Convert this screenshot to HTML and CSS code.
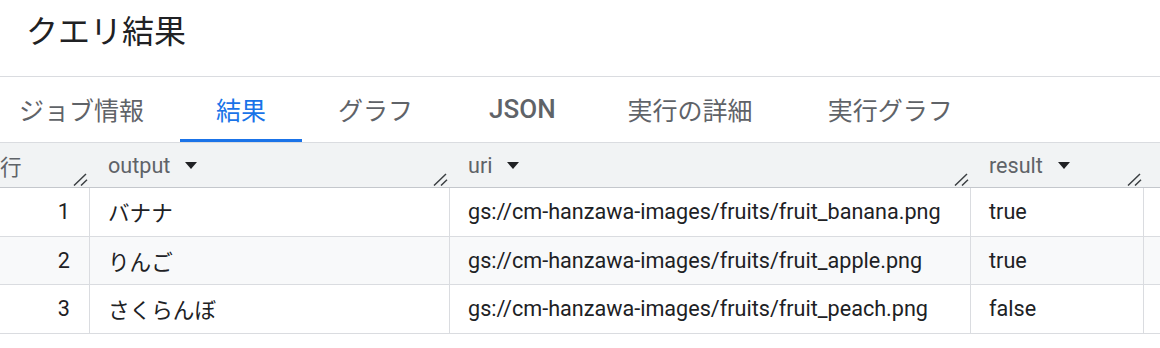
FILE: index.html
```html
<!DOCTYPE html>
<html lang="ja">
<head>
<meta charset="utf-8">
<link rel="stylesheet" href="styles.css">
</head>
<body>
<div class="title">クエリ結果</div>
<nav class="tabs">
  <div class="tab">ジョブ情報</div>
  <div class="tab active">結果</div>
  <div class="tab">グラフ</div>
  <div class="tab latin">JSON</div>
  <div class="tab">実行の詳細</div>
  <div class="tab wide">実行グラフ</div>
</nav>
<div class="grid">
  <div class="hcell"><span class="htext">行</span><svg class="resizer" width="15" height="13" viewBox="0 0 15 13"><path d="M1 12.5 L13 1 M8 12.5 L14 6.8" stroke="#3c4043" stroke-width="1.5" fill="none"/></svg></div>
  <div class="hcell"><span class="htext">output</span><span class="caret"></span><svg class="resizer" width="15" height="13" viewBox="0 0 15 13"><path d="M1 12.5 L13 1 M8 12.5 L14 6.8" stroke="#3c4043" stroke-width="1.5" fill="none"/></svg></div>
  <div class="hcell"><span class="htext">uri</span><span class="caret"></span><svg class="resizer" width="15" height="13" viewBox="0 0 15 13"><path d="M1 12.5 L13 1 M8 12.5 L14 6.8" stroke="#3c4043" stroke-width="1.5" fill="none"/></svg></div>
  <div class="hcell"><span class="htext">result</span><span class="caret"></span><svg class="resizer" width="15" height="13" viewBox="0 0 15 13"><path d="M1 12.5 L13 1 M8 12.5 L14 6.8" stroke="#3c4043" stroke-width="1.5" fill="none"/></svg></div>
  <div class="hcell"></div>

  <div class="cell num">1</div>
  <div class="cell">バナナ</div>
  <div class="cell">gs://cm-hanzawa-images/fruits/fruit_banana.png</div>
  <div class="cell">true</div>
  <div class="cell last"></div>

  <div class="cell num alt">2</div>
  <div class="cell alt">りんご</div>
  <div class="cell alt">gs://cm-hanzawa-images/fruits/fruit_apple.png</div>
  <div class="cell alt">true</div>
  <div class="cell alt last"></div>

  <div class="cell num">3</div>
  <div class="cell">さくらんぼ</div>
  <div class="cell">gs://cm-hanzawa-images/fruits/fruit_peach.png</div>
  <div class="cell">false</div>
  <div class="cell last"></div>
</div>
</body>
</html>
```

FILE: styles.css
```css
html, body {
  margin: 0;
  padding: 0;
  background: #ffffff;
  overflow: hidden;
}
body {
  font-family: Roboto, "Noto Sans CJK JP", sans-serif;
  color: #202124;
  width: 1160px;
  height: 348px;
}
.title {
  height: 77px;
  box-sizing: border-box;
  padding: 12px 0 0 26px;
  font-size: 32px;
  line-height: 40px;
  color: #202124;
  border-bottom: 1px solid #dadce0;
}
.tabs {
  display: flex;
  margin-left: -17px;
  height: 65px;
}
.tab {
  padding: 0 36px;
  height: 65px;
  box-sizing: border-box;
  border-bottom: 3px solid transparent;
  display: flex;
  align-items: center;
  padding-top: 2px;
  font-size: 25px;
  color: #5f6368;
  white-space: nowrap;
}
.tab.latin {
  font-weight: 500;
  font-size: 26px;
  padding-left: 40px;
}
.tab.wide {
  padding-left: 39px;
}
.tab.active {
  color: #1a73e8;
  border-bottom-color: #1a73e8;
}
.grid {
  display: grid;
  grid-template-columns: 108px 360px 521px 173px 1fr;
  margin-left: -18px;
  border-top: 1px solid #dadce0;
}
.hcell {
  height: 45px;
  box-sizing: border-box;
  background: #f1f3f4;
  border-bottom: 1px solid #c4c7cc;
  display: flex;
  align-items: center;
  padding: 0 2px 0 18px;
  font-size: 21.6px;
  color: #5f6368;
}
.htext {
  white-space: nowrap;
}
.caret {
  width: 0;
  height: 0;
  border-left: 6px solid transparent;
  border-right: 6px solid transparent;
  border-top: 7px solid #202124;
  margin-left: 15px;
}
.resizer {
  margin-left: auto;
  align-self: flex-end;
  margin-bottom: 1px;
}
.cell {
  height: 48.5px;
  box-sizing: border-box;
  border-bottom: 1px solid #dadce0;
  border-right: 1px solid #dadce0;
  display: flex;
  align-items: center;
  padding: 0 18px;
  font-size: 21.6px;
  color: #202124;
  white-space: nowrap;
  background: #ffffff;
}
.cell.num {
  justify-content: flex-end;
  padding-right: 19px;
}
.cell.alt {
  background: #f8f9fa;
}
.cell.last {
  border-right: none;
}
```
